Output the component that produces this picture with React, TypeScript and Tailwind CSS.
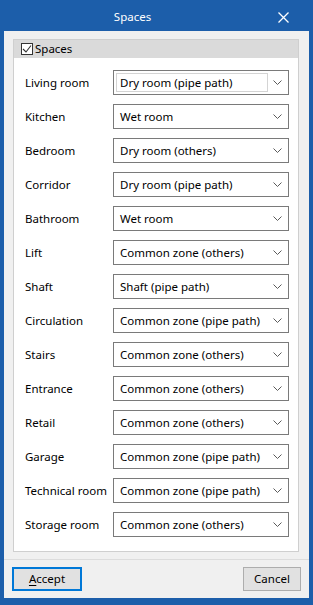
import React from "react";

const rows: [string, string][] = [
  ["Living room", "Dry room (pipe path)"],
  ["Kitchen", "Wet room"],
  ["Bedroom", "Dry room (others)"],
  ["Corridor", "Dry room (pipe path)"],
  ["Bathroom", "Wet room"],
  ["Lift", "Common zone (others)"],
  ["Shaft", "Shaft (pipe path)"],
  ["Circulation", "Common zone (pipe path)"],
  ["Stairs", "Common zone (others)"],
  ["Entrance", "Common zone (others)"],
  ["Retail", "Common zone (others)"],
  ["Garage", "Common zone (pipe path)"],
  ["Technical room", "Common zone (pipe path)"],
  ["Storage room", "Common zone (others)"],
];

function Chevron() {
  return (
    <svg width="9" height="5" viewBox="0 0 9 5" className="shrink-0">
      <path d="M0.5 0.5 L4.5 4.5 L8.5 0.5" fill="none" stroke="#5a5a5a" strokeWidth="1" />
    </svg>
  );
}

function Select({ value, focused }: { value: string; focused?: boolean }) {
  return (
    <div className="w-[176px] h-[25px] border border-[#7a7a7a] bg-white flex items-center">
      {focused ? (
        <div className="ml-[2px] w-[152px] h-[19px] border border-[#d4d4d4] flex items-center pl-[3px]">
          <span className="leading-none">{value}</span>
        </div>
      ) : (
        <div className="ml-[2px] w-[152px] h-[19px] flex items-center pl-[4px]">
          <span className="leading-none">{value}</span>
        </div>
      )}
      <div className="flex-1 flex justify-center pr-[1px]">
        <Chevron />
      </div>
    </div>
  );
}

export default function App() {
  return (
    <div
      className="w-[313px] h-[605px] bg-[#1c5eaa] flex flex-col px-[4px] pb-[7px] text-[11.5px] text-black"
      style={{ fontFamily: '"Noto Sans", "Open Sans", sans-serif' }}
    >
      <div className="h-[31px] relative flex items-center justify-center pr-[48px] pt-[2px] shrink-0">
        <span className="text-white text-[11.5px]">Spaces</span>
        <svg
          className="absolute right-[20px] top-[12px]"
          width="11"
          height="11"
          viewBox="0 0 11 11"
        >
          <path d="M0.5 0.5 L10.5 10.5 M10.5 0.5 L0.5 10.5" stroke="white" strokeWidth="1.3" />
        </svg>
      </div>
      <div className="flex-1 bg-[#f0f0f0] flex flex-col">
        <div className="mt-[8px] ml-[9px] mr-[10px] h-[513px] border border-[#cfcfcf] bg-white flex flex-col">
          <div className="h-[18px] bg-[#dadada] flex items-center pl-[7px] gap-[2px]">
            <div className="w-[12px] h-[12px] border border-[#333333] bg-white flex items-center justify-center">
              <svg width="10" height="10" viewBox="0 0 10 10">
                <path d="M1 5 L4 8 L9 1.5" fill="none" stroke="#333333" strokeWidth="1.1" />
              </svg>
            </div>
            <span className="leading-none">Spaces</span>
          </div>
          <div className="flex flex-col gap-[9px] pt-[12px] pl-[11px]">
            {rows.map(([label, value], i) => (
              <div key={label} className="flex items-center h-[25px]">
                <span className="w-[88px] leading-none">{label}</span>
                <Select value={value} focused={i === 0} />
              </div>
            ))}
          </div>
        </div>
        <div className="mt-[7px] h-px bg-[#dcdcdc]" />
        <div className="flex justify-between mt-[7px] ml-[8px] mr-[8px]">
          <button className="w-[70px] h-[24px] border-2 border-[#0078d7] bg-[#e1e1e1] flex items-center justify-center leading-none">
            <span>
              <span className="underline underline-offset-2">A</span>ccept
            </span>
          </button>
          <button className="w-[58px] h-[24px] border border-[#adadad] bg-[#e1e1e1] flex items-center justify-center leading-none">
            Cancel
          </button>
        </div>
      </div>
    </div>
  );
}
